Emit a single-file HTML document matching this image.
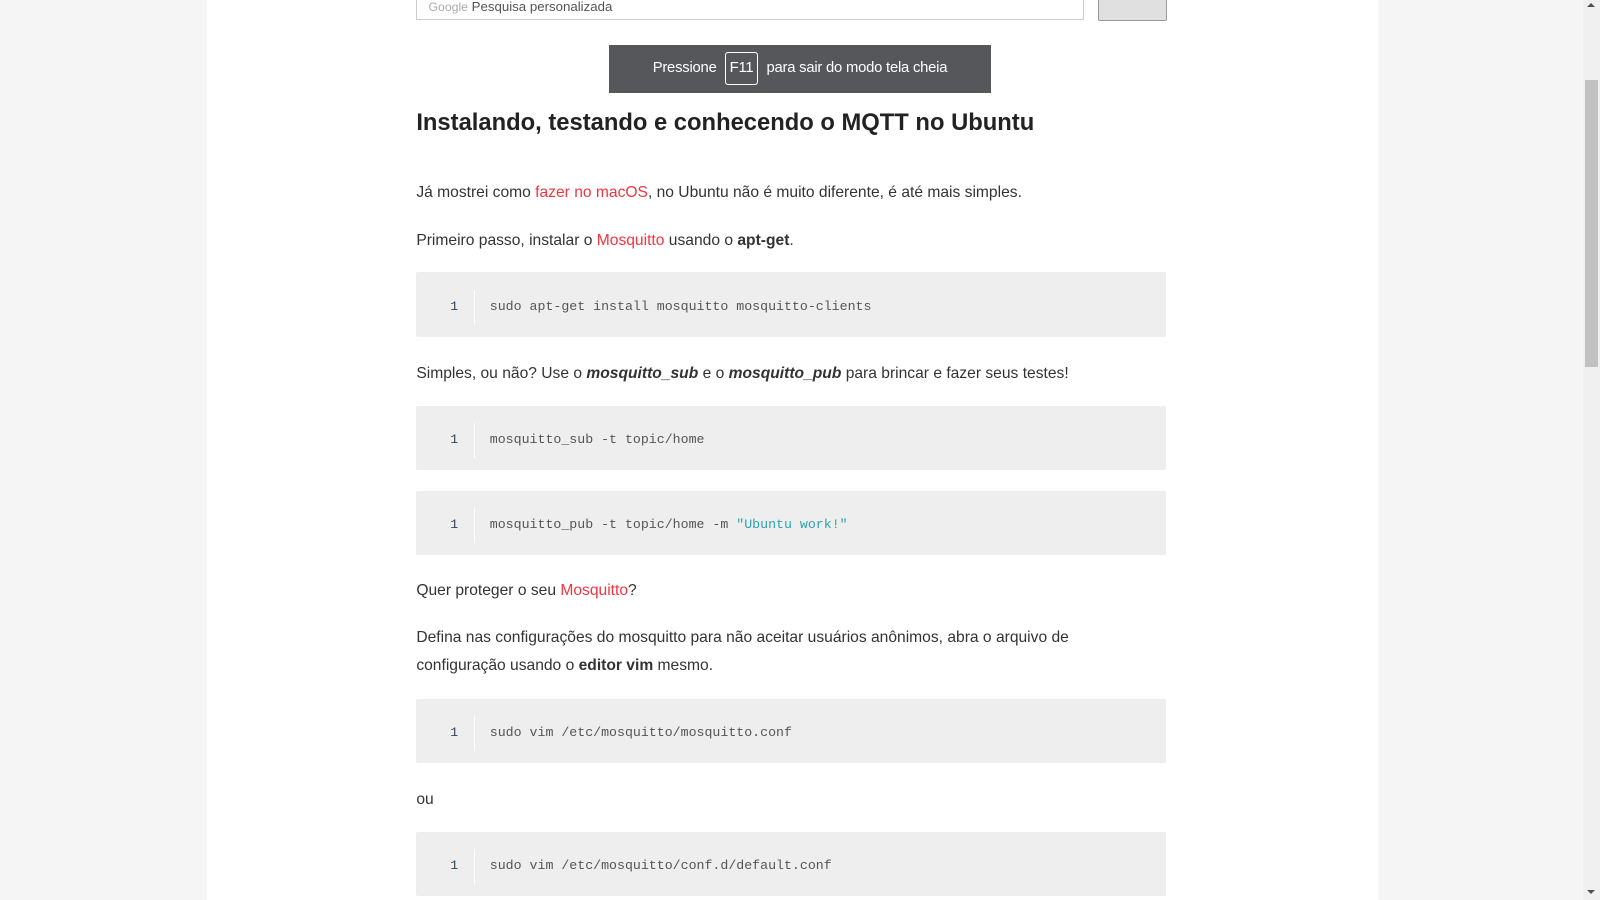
<!DOCTYPE html>
<html><head><meta charset="utf-8"><style>
html{zoom:1.020408}
body{margin:0;width:1568px;height:882px;background:#f5f5f5;position:relative;overflow:hidden;font-family:"Liberation Sans",sans-serif;color:#333}
.col{position:absolute;left:203px;top:0;width:1147px;height:882px;background:#fff}
.a{position:absolute}
.p{position:absolute;left:408px;font-size:15.3px;line-height:27px;color:#333;white-space:nowrap}
.p a{color:#f2343f;text-decoration:none}
.code{position:absolute;left:408px;width:735px;height:63px;background:#eeeeee;border-radius:2px}
.code .n{position:absolute;left:0;width:41px;padding-right:16px;border-right:1px solid #fff;height:34px;top:17px;line-height:34px;text-align:right;font-family:"Liberation Mono",monospace;font-size:13px;color:#345}
.code .c{position:absolute;left:72px;top:17px;line-height:34px;font-family:"Liberation Mono",monospace;font-size:13px;color:#555;white-space:nowrap}
.s{color:#2aa3b0}
</style></head><body>
<div class="col"></div>
<div class="a" style="left:408px;top:-10px;width:652px;height:28px;border:1px solid #ccc;background:#fff;font-size:13px;line-height:32px;color:#555;"><span style="color:#aaa;font-size:12px;margin-left:11px">Google</span> Pesquisa personalizada</div>
<div class="a" style="left:1076px;top:-10px;width:66px;height:29px;border:1px solid #999;background:#e0e0e0;border-radius:2px"></div>
<div class="a" style="left:597px;top:44px;width:374px;height:47px;background:#55575b;color:#fff;font-size:14.5px;line-height:47px;text-align:center;white-space:nowrap;letter-spacing:-0.2px">Pressione <span style="display:inline-block;border:1px solid #fff;border-radius:3px;padding:0 4px;line-height:30px;margin:0 4px">F11</span> para sair do modo tela cheia</div>
<div class="a" style="left:408px;top:105px;font-size:23.3px;font-weight:bold;color:#222;line-height:32px;white-space:nowrap">Instalando, testando e conhecendo o MQTT no Ubuntu</div>
<div class="p" style="top:175px">Já mostrei como <a>fazer no macOS</a>, no Ubuntu não é muito diferente, é até mais simples.</div>
<div class="p" style="top:222px">Primeiro passo, instalar o <a>Mosquitto</a> usando o <b>apt-get</b>.</div>
<div class="code" style="top:267px"><div class="n">1</div><div class="c">sudo apt-get install mosquitto mosquitto-clients</div></div>
<div class="p" style="top:353px">Simples, ou não? Use o <b><i>mosquitto_sub</i></b> e o <b><i>mosquitto_pub</i></b> para brincar e fazer seus testes!</div>
<div class="code" style="top:398px"><div class="n">1</div><div class="c">mosquitto_sub -t topic/home</div></div>
<div class="code" style="top:481px"><div class="n">1</div><div class="c">mosquitto_pub -t topic/home -m <span class="s">"Ubuntu work!"</span></div></div>
<div class="p" style="top:565px">Quer proteger o seu <a>Mosquitto</a>?</div>
<div class="p" style="top:612px">Defina nas configurações do mosquitto para não aceitar usuários anônimos, abra o arquivo de<br>configuração usando o <b>editor vim</b> mesmo.</div>
<div class="code" style="top:685px"><div class="n">1</div><div class="c">sudo vim /etc/mosquitto/mosquitto.conf</div></div>
<div class="p" style="top:770px">ou</div>
<div class="code" style="top:815px"><div class="n">1</div><div class="c">sudo vim /etc/mosquitto/conf.d/default.conf</div></div>
<div class="a" style="left:1551px;top:0;width:17px;height:882px;background:#f0f0f0"></div>
<div class="a" style="left:1553px;top:78px;width:13px;height:282px;background:#c1c1c1"></div>
<div class="a" style="left:1555px;top:3px;width:0;height:0;border:4px solid transparent;border-bottom:4px solid #505050;border-top:0"></div>
<div class="a" style="left:1555px;top:872px;width:0;height:0;border:4px solid transparent;border-top:4px solid #505050;border-bottom:0"></div>
</body></html>
